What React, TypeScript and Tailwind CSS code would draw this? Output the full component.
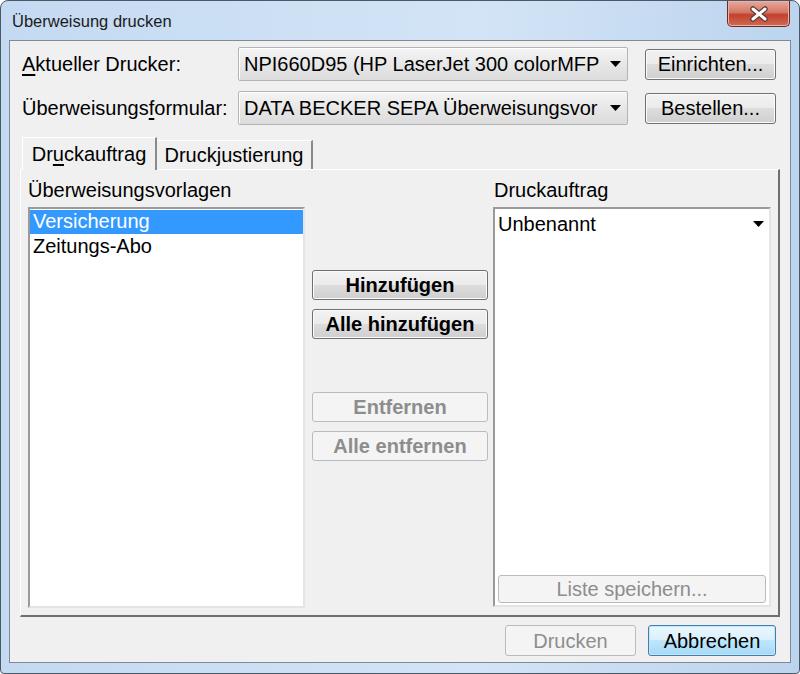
import React from "react";

const font = "font-['Liberation_Sans',Arial,sans-serif]";

const btn =
  "flex items-center justify-center rounded-[3px] border border-[#707070] bg-[linear-gradient(#f2f2f2,#ebebeb_50%,#dddddd_50%,#cfcfcf)] shadow-[inset_0_0_0_1px_#fbfbfb] text-[20px] text-black";
const btnDisabled =
  "flex items-center justify-center rounded-[3px] border border-[#b9bcbe] bg-[#f4f4f4] text-[20px] text-[#8d8d8d]";

function Arrow() {
  return (
    <svg width="11" height="6" viewBox="0 0 11 6">
      <polygon points="0,0 11,0 5.5,6" fill="#000" />
    </svg>
  );
}

function Combo({ text }: { text: string }) {
  return (
    <div className="flex h-[34px] w-[390px] items-center rounded-[2px] border border-[#b4b4b4] bg-[linear-gradient(#f5f5f5,#e6e6e6_55%,#dcdcdc)] pl-[5px] pr-[6px] shadow-[inset_1px_1px_0_#ffffff]">
      <span className="flex-1 whitespace-nowrap text-[20px] leading-[24px] text-black">{text}</span>
      <Arrow />
    </div>
  );
}

export default function App() {
  return (
    <div
      className={`${font} flex h-[674px] w-[800px] flex-col rounded-t-[8px] rounded-b-[4px] border border-[#4b5866] bg-[linear-gradient(90deg,#c4daf2,#d3e4f6_60%,#bcd4ee)]`}
    >
      {/* title bar */}
      <div className="flex h-[39px] shrink-0">
        <div className="flex-1 self-center pl-[11px] pt-[1px] text-[16.5px] text-[#1b1b1b]">
          Überweisung drucken
        </div>
        <div className="mr-[9px] flex h-[26px] w-[63px] items-center justify-center rounded-b-[5px] border border-t-0 border-[#6b2b25] bg-[linear-gradient(#e7a99d,#d47866_45%,#c2412f_55%,#cf6a52)] shadow-[inset_0_0_0_1px_#eab3a8]">
          <svg width="22" height="16" viewBox="0 0 22 16">
            <path d="M5 3 L17 13 M17 3 L5 13" stroke="#5a3a36" strokeWidth="5.5" strokeLinecap="round" />
            <path d="M5 3 L17 13 M17 3 L5 13" stroke="#ffffff" strokeWidth="3" strokeLinecap="round" />
          </svg>
        </div>
      </div>

      {/* client area */}
      <div className="mx-[8px] mb-[10px] flex flex-1 flex-col border border-[#7d8a97] bg-[#f0f0f0]">
        <div className="flex items-center pl-[12px] pt-[6px]">
          <div className="w-[216px] text-[20px] text-black">
            <span className="underline underline-offset-[3px]">A</span>ktueller Drucker:
          </div>
          <Combo text="NPI660D95 (HP LaserJet 300 colorMFP" />
          <div className={`${btn} ml-[17px] h-[31px] w-[131px]`}>Einrichten...</div>
        </div>
        <div className="mt-[10px] flex items-center pl-[12px]">
          <div className="w-[216px] text-[20px] text-black">
            Überweisungs<span className="underline underline-offset-[3px]">f</span>ormular:
          </div>
          <Combo text="DATA BECKER SEPA Überweisungsvor" />
          <div className={`${btn} ml-[17px] h-[31px] w-[131px]`}>Bestellen...</div>
        </div>

        {/* tabs */}
        <div className="mx-[10px] mt-[12px] flex flex-1 flex-col">
          <div className="relative z-10 flex items-end pl-[2px]">
            <div className="-mb-px flex h-[33px] w-[135px] items-center justify-center border-l border-t border-r-2 border-l-white border-t-white border-r-[#8a8a8a] bg-[#f0f0f0] text-[20px] text-black">
              Dr<span className="underline underline-offset-[3px]">u</span>ckauftrag
            </div>
            <div className="flex h-[29px] w-[156px] items-center justify-center border-t border-r-2 border-t-white border-r-[#8a8a8a] text-[20px] text-black">
              Druckjustierung
            </div>
          </div>
          <div className="flex flex-1 border-l border-t border-b-2 border-r-2 border-l-white border-t-white border-b-[#6f6f6f] border-r-[#6f6f6f] px-[7px] pb-[7px] pt-[8px]">
            {/* left */}
            <div className="flex w-[277px] flex-col">
              <div className="mb-[5px] text-[20px] leading-[24px] text-black">Überweisungsvorlagen</div>
              <div className="flex-1 border-2 border-b-[#e4e4e4] border-l-[#9a9a9a] border-r-[#e4e4e4] border-t-[#9a9a9a] bg-white pt-px">
                <div className="h-[24px] bg-[#3399ff] pl-[3px] text-[20px] leading-[23px] text-white">Versicherung</div>
                <div className="h-[24px] pl-[3px] text-[20px] leading-[24px] text-black">Zeitungs-Abo</div>
              </div>
            </div>

            {/* middle */}
            <div className="flex w-[188px] flex-col pl-[7px] pr-[5px] pt-[92px]">
              <div className={`${btn} h-[30px] font-bold`}>Hinzufügen</div>
              <div className={`${btn} mt-[9px] h-[30px] font-bold`}>Alle hinzufügen</div>
              <div className={`${btnDisabled} mt-[53px] h-[30px] font-bold`}>Entfernen</div>
              <div className={`${btnDisabled} mt-[9px] h-[30px] font-bold`}>Alle entfernen</div>
            </div>

            {/* right */}
            <div className="flex w-[278px] flex-col">
              <div className="mb-[5px] pl-px text-[20px] leading-[24px] text-black">Druckauftrag</div>
              <div className="mb-px flex flex-1 flex-col border-2 border-b-[#e4e4e4] border-l-[#9a9a9a] border-r-[#e4e4e4] border-t-[#9a9a9a] bg-white px-[3px] pb-[2px]">
                <div className="flex h-[30px] items-center pr-[2px]">
                  <span className="flex-1 text-[20px] text-black">Unbenannt</span>
                  <Arrow />
                </div>
                <div className="flex-1" />
                <div className={`${btnDisabled} h-[28px]`}>Liste speichern...</div>
              </div>
            </div>
          </div>
        </div>

        {/* bottom buttons */}
        <div className="flex justify-end gap-[12px] pb-[6px] pr-[14px] pt-[8px]">
          <div className={`${btnDisabled} h-[31px] w-[131px]`}>Drucken</div>
          <div className="flex h-[31px] w-[128px] items-center justify-center rounded-[3px] border border-[#3c7fb1] bg-[linear-gradient(#eaf6fd,#d9f0fc_50%,#bee6fd_50%,#a7d9f5)] text-[20px] text-black shadow-[inset_0_0_0_1px_#c6e6f8]">
            Abbrechen
          </div>
        </div>
      </div>
    </div>
  );
}
